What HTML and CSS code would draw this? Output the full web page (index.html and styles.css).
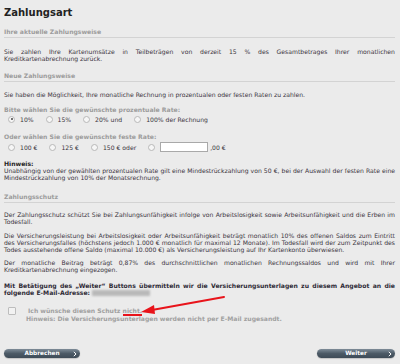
FILE: index.html
```html
<!DOCTYPE html>
<html lang="de">
<head>
<meta charset="utf-8">
<title>Zahlungsart</title>
<link rel="stylesheet" href="styles.css">
</head>
<body>
<div class="page">
  <h1 class="title">Zahlungsart</h1>

  <h2 class="sec">Ihre aktuelle Zahlungsweise</h2>
  <p class="txt p-first">Sie zahlen Ihre Kartenumsätze in Teilbeträgen von derzeit 15 % des Gesamtbetrages Ihrer monatlichen Kreditkartenabrechnung zurück.</p>

  <h2 class="sec sec-2">Neue Zahlungsweise</h2>
  <p class="txt p-intro">Sie haben die Möglichkeit, Ihre monatliche Rechnung in prozentualen oder festen Raten zu zahlen.</p>

  <div class="lbl lbl-1">Bitte wählen Sie die gewünschte prozentuale Rate:</div>
  <div class="opts opts-1">
    <span class="opt"><span class="radio on"></span>10%</span>
    <span class="opt"><span class="radio"></span>15%</span>
    <span class="opt"><span class="radio"></span>20% und</span>
    <span class="opt"><span class="radio"></span>100% der Rechnung</span>
  </div>

  <div class="lbl lbl-2">Oder wählen Sie die gewünschte feste Rate:</div>
  <div class="opts opts-2">
    <span class="opt"><span class="radio"></span>100 €</span>
    <span class="opt"><span class="radio"></span>125 €</span>
    <span class="opt"><span class="radio"></span>150 € oder</span>
    <span class="opt opt-input"><span class="radio"></span><span class="field"></span>,00 €</span>
  </div>

  <div class="note">
    <div class="note-h">Hinweis:</div>
    <p class="txt">Unabhängig von der gewählten prozentualen Rate gilt eine Mindestrückzahlung von 50 €, bei der Auswahl der festen Rate eine Mindestrückzahlung von 10% der Monatsrechnung.</p>
  </div>

  <h2 class="sec sec-3">Zahlungsschutz</h2>
  <p class="txt p-s1">Der Zahlungsschutz schützt Sie bei Zahlungsunfähigkeit infolge von Arbeitslosigkeit sowie Arbeitsunfähigkeit und die Erben im Todesfall.</p>
  <p class="txt p-s2">Die Versicherungsleistung bei Arbeitslosigkeit oder Arbeitsunfähigkeit beträgt monatlich 10% des offenen Saldos zum Eintritt des Versicherungsfalles (höchstens jedoch 1.000 € monatlich für maximal 12 Monate). Im Todesfall wird der zum Zeitpunkt des Todes ausstehende offene Saldo (maximal 10.000 €) als Versicherungsleistung auf Ihr Kartenkonto überwiesen.</p>
  <p class="txt p-s3">Der monatliche Beitrag beträgt 0,87% des durchschnittlichen monatlichen Rechnungssaldos und wird mit Ihrer Kreditkartenabrechnung eingezogen.</p>
  <p class="txt bold p-s4">Mit Betätigung des „Weiter“ Buttons übermitteln wir die Versicherungsunterlagen zu diesem Angebot an die folgende E-Mail-Adresse: <span class="blur"></span></p>

  <div class="check-row">
    <span class="check"></span>
    <span class="check-txt">Ich wünsche diesen Schutz <span class="mark">nicht.</span></span>
  </div>
  <div class="hint">Hinweis: Die Versicherungsunterlagen werden nicht per E-Mail zugesandt.</div>

  <div class="buttons">
    <span class="btn btn-back">Abbrechen<svg class="chev" viewBox="0 0 6 8" width="4" height="6"><path d="M1.2 0.8 L4.6 4 L1.2 7.2" fill="none" stroke="#fff" stroke-width="1.5"/></svg></span>
    <span class="btn btn-next">Weiter<svg class="chev" viewBox="0 0 6 8" width="4" height="6"><path d="M1.2 0.8 L4.6 4 L1.2 7.2" fill="none" stroke="#fff" stroke-width="1.5"/></svg></span>
  </div>

  <svg class="arrow" width="100" height="24" viewBox="0 0 100 24">
    <path d="M86 2 L14 15" stroke="#e8141b" stroke-width="2" fill="none" stroke-linecap="round"/>
    <path d="M3 17 L16 10 L17 19 Z" fill="#e8141b"/>
  </svg>
</div>
</body>
</html>
```

FILE: styles.css
```css
html, body {
  margin: 0;
  padding: 0;
  background: #ebebeb;
}
body {
  font-family: "DejaVu Sans", Verdana, sans-serif;
  font-size: 6.1px;
  line-height: 7px;
  color: #3a3440;
  width: 400px;
  height: 364px;
  overflow: hidden;
}
.page {
  position: relative;
  padding: 7px 5px 0 4px;
}
.title {
  margin: 0;
  font-size: 10px;
  line-height: 12px;
  font-weight: bold;
  color: #222;
}
.sec {
  margin: 9px 0 0;
  font-size: 6.1px;
  line-height: 7px;
  font-weight: bold;
  color: #9c9c9c;
  padding-bottom: 2px;
  border-bottom: 1px solid #d3d3d3;
}
.sec-2 { margin-top: 10px; }
.sec-3 { margin-top: 12px; }
.txt {
  margin: 0;
  text-align: justify;
}
.bold { font-weight: bold; color: #2e2a36; }
.p-first { margin-top: 10px; }
.p-intro { margin-top: 9px; }
.lbl {
  font-weight: bold;
  color: #9c9c9c;
  margin-top: 8px;
}
.lbl-2 { margin-top: 10px; }
.opts {
  display: flex;
  align-items: center;
  padding-left: 4px;
  margin-top: 2px;
  height: 8px;
}
.opts-2 {
  margin-top: 2px;
  height: 10px;
}
.opt {
  display: flex;
  align-items: center;
  margin-right: 12px;
}
.radio {
  width: 5px;
  height: 5px;
  border: 0.5px solid #b8b8b8;
  border-radius: 50%;
  background: #f6f6f6;
  margin-right: 5px;
  position: relative;
  flex: none;
}
.radio.on::after {
  content: "";
  position: absolute;
  left: 1.5px;
  top: 1.5px;
  width: 2px;
  height: 2px;
  border-radius: 50%;
  background: #444;
}
.field {
  width: 46px;
  height: 8px;
  background: #fff;
  border: 1px solid #a9a9a9;
  margin-right: 2px;
  flex: none;
}
.note { margin-top: 8px; }
.note-h { font-weight: bold; color: #222; }
.p-s1 { margin-top: 8px; }
.p-s2 { margin-top: 7px; }
.p-s3 { margin-top: 6px; }
.p-s4 { margin-top: 9px; }
.blur {
  display: inline-block;
  width: 58px;
  height: 6px;
  background: #b9b9b9;
  vertical-align: -1px;
  filter: blur(0.8px);
}
.check-row {
  display: flex;
  align-items: center;
  margin-top: 10px;
  padding-left: 4px;
  height: 9px;
}
.check {
  width: 6px;
  height: 6px;
  border: 0.5px solid #bdbdbd;
  border-radius: 1px;
  background: #f2f2f2;
  margin-right: 12px;
}
.check-txt {
  font-weight: bold;
  color: #a0a0a0;
}
.mark {
  border-bottom: 2px solid #e8141b;
}
.hint {
  font-weight: bold;
  color: #a0a0a0;
  padding-left: 22px;
}
.buttons {
  display: flex;
  justify-content: space-between;
  margin-top: 27px;
}
.btn {
  position: relative;
  display: flex;
  align-items: center;
  justify-content: center;
  width: 76px;
  height: 9px;
  border-radius: 5px;
  background: linear-gradient(#7e8c98, #4c5a66 50%, #3e4b57);
  box-shadow: 0 0.5px 1px rgba(0,0,0,0.3);
  color: #fff;
  font-weight: bold;
  font-size: 5.8px;
  line-height: 9px;
}
.btn-next { width: 78px; }
.chev {
  position: absolute;
  right: 3px;
  top: 1.5px;
}
.arrow {
  position: absolute;
  left: 138px;
  top: 295px;
}
```
